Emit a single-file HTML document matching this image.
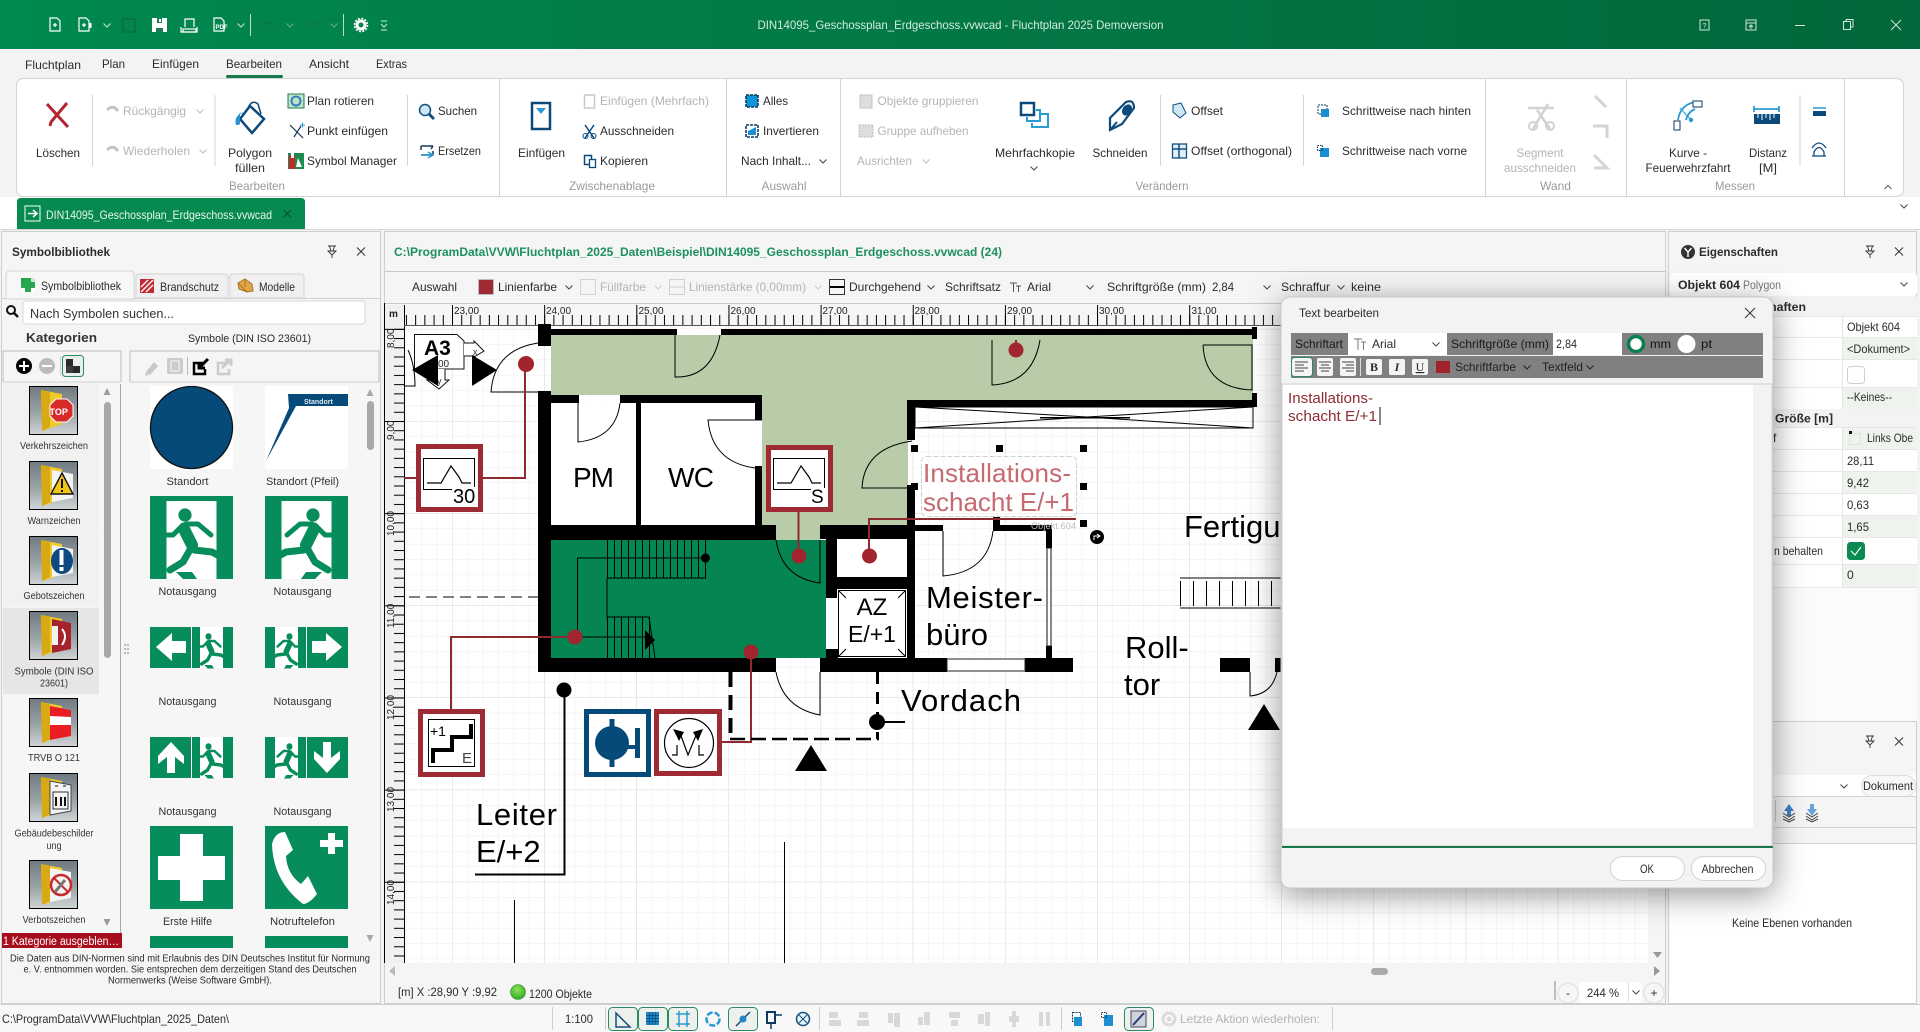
<!DOCTYPE html>
<html lang="de"><head><meta charset="utf-8"><title>Fluchtplan 2025</title>
<style>
html,body{margin:0;padding:0;background:#f3f3f3;overflow:hidden}
svg{display:block}
text{font-family:"Liberation Sans",Arial,sans-serif;font-size:12px;fill:#2b2b2b;white-space:pre}
.g{fill:#b4b4b4}.l{fill:#999}.b{font-weight:bold}.c{text-anchor:middle}
.s{font-size:10px;fill:#333}.w{fill:#111}
.a{font-family:"Liberation Sans",Arial,sans-serif;fill:#000}
.r{font-size:10px;fill:#222}
.ic{fill:none;stroke:#0d4a7c;stroke-width:1.5}
.li{fill:none;stroke:#2a9bd0;stroke-width:2}
.gr{fill:none;stroke:#c9c9c9;stroke-width:1.5}
.th{fill:none;stroke:#000;stroke-width:1}
.red{fill:none;stroke:#8f2a30;stroke-width:2}
.dot{fill:#a0252f}
</style></head><body>
<svg xmlns="http://www.w3.org/2000/svg" width="1920" height="1032" viewBox="0 0 1920 1032">
<defs>
<linearGradient id="tb" x1="0" x2="1" y1="0" y2="0"><stop offset="0" stop-color="#01894f"/><stop offset="1" stop-color="#02673a"/></linearGradient>
<linearGradient id="th" x1="0" x2="0" y1="0" y2="1"><stop offset="0" stop-color="#6f7a80"/><stop offset=".55" stop-color="#9aa3a8"/><stop offset="1" stop-color="#d0d4d6"/></linearGradient>
<radialGradient id="ball" cx=".45" cy=".35" r=".7"><stop offset="0" stop-color="#8fe35c"/><stop offset="1" stop-color="#27a51f"/></radialGradient>
<pattern id="gMin" patternUnits="userSpaceOnUse" x="452" y="421" width="15.36" height="15.36"><path d="M0 0V15.36M0 0H15.36" stroke="#ececec" fill="none"/></pattern>
<pattern id="gMaj" patternUnits="userSpaceOnUse" x="452" y="421" width="92.15" height="92.15"><path d="M0 0V92.15M0 0H92.15" stroke="#dadada" fill="none"/></pattern>
<pattern id="tT" patternUnits="userSpaceOnUse" x="452" y="305" width="9.215" height="20"><path d="M.5 10V20" stroke="#000" fill="none"/></pattern>
<pattern id="tTM" patternUnits="userSpaceOnUse" x="452" y="305" width="92.15" height="20"><path d="M.5 0V20" stroke="#000" fill="none"/></pattern>
<pattern id="tL" patternUnits="userSpaceOnUse" x="385" y="421" width="19" height="9.215"><path d="M9 .5H19" stroke="#000" fill="none"/></pattern>
<pattern id="tLM" patternUnits="userSpaceOnUse" x="385" y="421" width="19" height="92.15"><path d="M0 .5H19" stroke="#000" fill="none"/></pattern>
<path id="ch" d="M-3.5-1.5 0 2 3.5-1.5" fill="none"/>
<g id="m">
 <circle cx="35" cy="19" r="6.6" fill="#078c5c"/>
 <g fill="none" stroke="#078c5c" stroke-linecap="round" stroke-linejoin="round">
  <path d="M34 33 42 49" stroke-width="12"/>
  <path d="M33 29 23 39H17M36 28 48 28 61 39" stroke-width="5"/>
  <path d="M44 54 62 56 75 63M41 52 33 66 20 74" stroke-width="7"/>
 </g>
 <path d="M26 76H42L47 83H33Z" fill="#078c5c"/>
</g>
<g id="man"><rect width="83" height="83" fill="#078c5c"/><rect x="16.5" y="5" width="50" height="78" fill="#fff"/><use href="#m"/></g>
<g id="mini"><rect width="41" height="41" fill="#078c5c"/><rect x="8" y="0" width="23" height="41" fill="#fff"/><g transform="translate(.4 0) scale(.46 .5)"><use href="#m"/></g></g>
<path id="pin" d="M-4-5H4M-2.500-5-1 0H1L2.500-5M-4 0H4L0 4ZM0 4V7" fill="none" stroke="#333" stroke-width=".9"/>
<path id="xx" d="M-4-4 4 4M4-4-4 4" fill="none" stroke="#333" stroke-width="1"/>
<filter id="sh" x="-10%" y="-10%" width="120%" height="125%"><feDropShadow dx="0" dy="6" stdDeviation="16" flood-color="#000" flood-opacity=".42"/></filter>
<g id="fold"><rect x=".5" y=".5" width="48" height="48" fill="url(#th)" stroke="#000"/><path d="M12 4 33 8V38L13 45Z" fill="#f0c92b"/><path d="M12 4 21 6V41L13 45Z" fill="#d7a915"/></g>
</defs>

<!-- base -->
<rect width="1920" height="1032" fill="#f3f3f3"/>
<!-- title bar -->
<rect width="1920" height="49" fill="url(#tb)"/>
<g fill="none" stroke="#fff" stroke-width="1.2">
 <path d="M50 18H57L60 21V31H50Z"/><path d="M53 25H57M55 23V27"/>
 <path d="M79 18H86L89 21V31H79Z"/><path d="M82 25H86M84 23V27"/><path d="M90 23V28" stroke-width="3"/>
 <rect x="183" y="29" width="13" height="3"/><path d="M181 27V32H197V27M185 27V19H194V27"/>
 <path d="M214 18H221L224 21V31H214Z"/>
</g>
<text x="215.500" y="29" style="font-size:6px;font-weight:bold;fill:#fff">PDF</text>
<path d="M152 18H167V32H152Z" fill="#fff"/><path d="M157 18H162V23H157ZM156 28H163V32H156Z" fill="#1c7e50"/><rect x="159" y="19" width="2" height="3" fill="#fff"/>
<rect x="123" y="19" width="12" height="13" fill="none" stroke="#0d6d42" stroke-width="1.5"/>
<g stroke="#c8e6d4" stroke-width="1"><use href="#ch" x="107" y="25"/><use href="#ch" x="241" y="25"/></g>
<g stroke="#6cad8c" stroke-width="1"><use href="#ch" x="290" y="25"/><use href="#ch" x="334" y="25"/></g>
<path d="M250.500 14V36M343.500 14V36" stroke="#bcdcca"/>
<path d="M261 26Q267 19 273 26M308 26Q314 19 320 26" stroke="#0f7347" stroke-width="1.5" fill="none"/>
<circle cx="361" cy="25" r="4" fill="none" stroke="#fff" stroke-width="3"/><circle cx="361" cy="25" r="6.500" fill="none" stroke="#fff" stroke-dasharray="2 1.400" stroke-width="1.600"/>
<path d="M381 21H387M381 24 384 27 387 24M381 30H387" fill="none" stroke="#cfe8da"/>
<text x="757.500" y="29" textLength="406" lengthAdjust="spacingAndGlyphs" style="fill:#d5ebde">DIN14095_Geschossplan_Erdgeschoss.vvwcad - Fluchtplan 2025 Demoversion</text>
<g fill="none" stroke="#cfe6d8">
 <rect x="1700" y="20" width="9" height="10"/><rect x="1746" y="20" width="10" height="10"/><path d="M1746 23H1756M1751 29V25M1749 27 1751 25 1753 27"/>
 <path d="M1795 25.500H1805"/><rect x="1843.500" y="21.500" width="7" height="8"/><path d="M1846 21V19.500H1853V27H1851"/><path d="M1891 20 1901 30M1901 20 1891 30"/>
</g>
<text x="1702.500" y="28" style="font-size:7px;fill:#cfe6d8">?</text>

<!-- ribbon tabs -->
<text x="25" y="69" textLength="56" lengthAdjust="spacingAndGlyphs">Fluchtplan</text>
<text x="102" y="68" textLength="23" lengthAdjust="spacingAndGlyphs">Plan</text>
<text x="152" y="68" textLength="47" lengthAdjust="spacingAndGlyphs">Einfügen</text>
<text x="226" y="68" textLength="56" lengthAdjust="spacingAndGlyphs">Bearbeiten</text>
<text x="309" y="68" textLength="40" lengthAdjust="spacingAndGlyphs">Ansicht</text>
<text x="376" y="68" textLength="31" lengthAdjust="spacingAndGlyphs">Extras</text>
<rect x="226" y="75" width="57" height="3" rx="1.500" fill="#137a4e"/>
<!-- ribbon -->
<path d="M24 78.500H1895Q1903.500 78.500 1903.500 86V188Q1903.500 196.500 1895 196.500H24Q16.500 196.500 16.500 188V86Q16.500 78.500 24 78.500Z" fill="#fff" stroke="#d4d4d4"/>
<g stroke="#d4d4d4"><path d="M499.500 79V196M726.500 79V196M840.500 79V196M1485.500 79V196M1626.500 79V196M1844.500 79V196"/>
<path d="M92.500 95V166M215 95V166M407.500 95V166M1160.500 95V166M1303.500 95V166M1800 95V166"/></g>
<rect y="197" width="1920" height="32" fill="#fff"/><path d="M0 229.500H1920" stroke="#d4d4d4"/>
<!-- ribbon labels -->
<text class="c" x="58" y="157" textLength="44" lengthAdjust="spacingAndGlyphs">Löschen</text>
<text class="g" x="123" y="115" textLength="63" lengthAdjust="spacingAndGlyphs">Rückgängig</text>
<text class="g" x="123" y="155" textLength="67" lengthAdjust="spacingAndGlyphs">Wiederholen</text>
<text class="c" x="250" y="157" textLength="44" lengthAdjust="spacingAndGlyphs">Polygon</text>
<text class="c" x="250" y="172" textLength="30" lengthAdjust="spacingAndGlyphs">füllen</text>
<text x="307" y="105" textLength="67" lengthAdjust="spacingAndGlyphs">Plan rotieren</text>
<text x="307" y="135" textLength="81" lengthAdjust="spacingAndGlyphs">Punkt einfügen</text>
<text x="307" y="165" textLength="90" lengthAdjust="spacingAndGlyphs">Symbol Manager</text>
<text x="438" y="115" textLength="39" lengthAdjust="spacingAndGlyphs">Suchen</text>
<text x="438" y="155" textLength="43" lengthAdjust="spacingAndGlyphs">Ersetzen</text>
<text class="c l" x="257" y="190" textLength="56" lengthAdjust="spacingAndGlyphs">Bearbeiten</text>
<text class="c" x="541.500" y="157" textLength="47" lengthAdjust="spacingAndGlyphs">Einfügen</text>
<text class="g" x="600" y="105" textLength="109" lengthAdjust="spacingAndGlyphs">Einfügen (Mehrfach)</text>
<text x="600" y="135" textLength="74" lengthAdjust="spacingAndGlyphs">Ausschneiden</text>
<text x="600" y="165" textLength="48" lengthAdjust="spacingAndGlyphs">Kopieren</text>
<text class="c l" x="612" y="190" textLength="86" lengthAdjust="spacingAndGlyphs">Zwischenablage</text>
<text x="763" y="105" textLength="25" lengthAdjust="spacingAndGlyphs">Alles</text>
<text x="763" y="135" textLength="56" lengthAdjust="spacingAndGlyphs">Invertieren</text>
<text x="741" y="165" textLength="70" lengthAdjust="spacingAndGlyphs">Nach Inhalt...</text>
<text class="c l" x="784" y="190" textLength="45" lengthAdjust="spacingAndGlyphs">Auswahl</text>
<text class="g" x="877.500" y="105" textLength="101" lengthAdjust="spacingAndGlyphs">Objekte gruppieren</text>
<text class="g" x="877.500" y="135" textLength="91" lengthAdjust="spacingAndGlyphs">Gruppe aufheben</text>
<text class="g" x="857" y="165" textLength="55" lengthAdjust="spacingAndGlyphs">Ausrichten</text>
<text class="c" x="1035" y="157" textLength="80" lengthAdjust="spacingAndGlyphs">Mehrfachkopie</text>
<text class="c" x="1120" y="157" textLength="55" lengthAdjust="spacingAndGlyphs">Schneiden</text>
<text x="1191" y="115" textLength="32" lengthAdjust="spacingAndGlyphs">Offset</text>
<text x="1191" y="155" textLength="101" lengthAdjust="spacingAndGlyphs">Offset (orthogonal)</text>
<text class="c l" x="1162" y="190" textLength="53" lengthAdjust="spacingAndGlyphs">Verändern</text>
<text x="1342" y="115" textLength="129" lengthAdjust="spacingAndGlyphs">Schrittweise nach hinten</text>
<text x="1342" y="155" textLength="125" lengthAdjust="spacingAndGlyphs">Schrittweise nach vorne</text>
<text class="c g" x="1540" y="157" textLength="47" lengthAdjust="spacingAndGlyphs">Segment</text>
<text class="c g" x="1540" y="172" textLength="72" lengthAdjust="spacingAndGlyphs">ausschneiden</text>
<text class="c l" x="1555.500" y="190" textLength="31" lengthAdjust="spacingAndGlyphs">Wand</text>
<text class="c" x="1688" y="157" textLength="38" lengthAdjust="spacingAndGlyphs">Kurve -</text>
<text class="c" x="1688" y="172" textLength="85" lengthAdjust="spacingAndGlyphs">Feuerwehrzfahrt</text>
<text class="c" x="1768" y="157" textLength="38" lengthAdjust="spacingAndGlyphs">Distanz</text>
<text class="c" x="1768" y="172" textLength="18" lengthAdjust="spacingAndGlyphs">[M]</text>
<text class="c l" x="1735" y="190" textLength="40" lengthAdjust="spacingAndGlyphs">Messen</text>
<g stroke="#bbb"><use href="#ch" x="200" y="111"/><use href="#ch" x="203" y="151"/><use href="#ch" x="926" y="161"/></g>
<g stroke="#444"><use href="#ch" x="823" y="161"/><use href="#ch" x="1034" y="168"/><use href="#ch" x="1904" y="206"/></g>
<path d="M1884.500 189 1888 185.500 1891.500 189" fill="none" stroke="#555"/>
<!-- ribbon icons -->
<path d="M47 104 68 127M67 103 51 122 50 126" stroke="#b32530" stroke-width="3" fill="none"/>
<path d="M107 110Q113 104 118 111M107 150Q113 144 118 151" stroke="#c4c4c4" stroke-width="3" fill="none"/>
<path d="M250 106 264 119 252 133 240 119Z" fill="none" stroke="#0d4a7c" stroke-width="2.500"/><path d="M240 114V124Q234 128 236 118L240 113 246 112Z" fill="#2a8fd0"/><path d="M248 108Q252 99 258 104L261 114" fill="none" stroke="#0d4a7c" stroke-width="1.500"/>
<rect x="288" y="94" width="16" height="14" fill="#bfe0cc" stroke="#1b7d50"/><circle cx="296" cy="101" r="4.500" fill="none" stroke="#2a7bb5" stroke-width="1.800"/>
<path d="M290 125 303 138M301 126 294 137" stroke="#16395e" stroke-width="1.200" fill="none"/><path d="M300 125H305M302.500 122.500V127.500" stroke="#2a9bd0"/>
<rect x="288" y="153" width="16" height="16" fill="#1d8a4e"/><rect x="289" y="155" width="6" height="14" fill="#c32a2a"/><path d="M291 153h3v5h-3zM298 158l4 9h-6z" fill="#fff"/>
<circle cx="425" cy="110" r="5.500" fill="#cfe6f5" stroke="#13507f" stroke-width="1.500"/><path d="M429 114 434 119" stroke="#13507f" stroke-width="3"/>
<path d="M421 146H433M421 146V150M433 146 431 149M433 155H421M433 155V151" stroke="#16395e" stroke-width="1.500" fill="none"/><path d="M421 155H431M428 152 433 155 428 158" stroke="#2a9bd0" stroke-width="1.500" fill="none"/>
<rect x="532" y="103" width="18" height="26" fill="none" stroke="#0d4a7c" stroke-width="2.500"/><path d="M536 108H546L541 114Z" fill="#2a9bd0"/>
<rect x="584.500" y="95" width="10" height="13" class="gr"/>
<path d="M585 125 594 138M594 125 585 138" stroke="#0d4a7c" stroke-width="1.500"/><circle cx="585.500" cy="136" r="2.500" fill="none" stroke="#0d4a7c"/><circle cx="593.500" cy="136" r="2.500" fill="none" stroke="#0d4a7c"/>
<rect x="584.500" y="155.500" width="7" height="9" class="ic"/><rect x="589.500" y="159.500" width="6" height="8" fill="#fff" stroke="#0d4a7c" stroke-width="1.300"/>
<rect x="746" y="95" width="12" height="12" fill="#0f96d8" stroke="#0d3a5e" stroke-width="1.600" stroke-dasharray="3 1"/>
<rect x="746" y="125" width="12" height="12" fill="#fff" stroke="#0d3a5e" stroke-width="1.600" stroke-dasharray="3 1"/><path d="M748 135V131L756 127V135Z" fill="#1b8fd0"/>
<rect x="860" y="95" width="12" height="13" fill="#ddd" stroke="#c4c4c4"/><rect x="859" y="125" width="14" height="12" fill="#ddd" stroke="#bfbfbf" stroke-dasharray="2 1"/>
<rect x="1021" y="103" width="13" height="12" fill="none" stroke="#0d4a7c" stroke-width="2.500"/><path d="M1036 110H1040V121H1027V117M1041 114H1048V127H1032V123" fill="none" stroke="#2a9bd0" stroke-width="2"/>
<path d="M1110 130V118L1126 102Q1134 99 1134 108L1122 124Z" fill="none" stroke="#0d4a7c" stroke-width="2.200"/><ellipse cx="1127" cy="110" rx="4.500" ry="6" transform="rotate(35 1127 110)" fill="#0d4a7c"/><path d="M1110 130 1117 122" stroke="#0d4a7c" stroke-width="2"/>
<path d="M1173 105 1181 103 1186 113 1180 118 1173 112Z" fill="#cfe6f5" stroke="#12507d"/>
<rect x="1172.500" y="144" width="14" height="14" fill="#e0eef8" stroke="#12507d" stroke-width="1.300"/><path d="M1172 149H1187M1179 144V158" stroke="#12507d" stroke-width="1.500"/>
<rect x="1318" y="105" width="9" height="9" fill="#fff" stroke="#0d3a5e" stroke-dasharray="2 1"/><rect x="1321" y="109" width="8" height="8" fill="#1b8fd0"/>
<rect x="1320" y="148" width="9" height="9" fill="#1b8fd0"/><rect x="1317.500" y="145.500" width="5" height="5" fill="none" stroke="#0d3a5e" stroke-dasharray="1.500 1"/>
<path d="M1528 108H1554M1533 129 1548 104M1550 129 1537 110" stroke="#d2d2d2" stroke-width="2.500" fill="none"/><circle cx="1533" cy="126" r="4" fill="none" stroke="#d2d2d2" stroke-width="2"/><circle cx="1550" cy="126" r="4" fill="none" stroke="#d2d2d2" stroke-width="2"/>
<path d="M1595 96 1606 107M1593 126H1607V138M1594 155 1607 168H1594" stroke="#d4d4d4" stroke-width="3" fill="none"/>
<path d="M1678 120Q1680 105 1695 102M1686 120Q1688 112 1695 109" fill="none" stroke="#2a9bd0" stroke-width="1.800"/><rect x="1693" y="101" width="9" height="6" fill="#fff" stroke="#0d3a5e"/><rect x="1674" y="121" width="6" height="9" fill="#fff" stroke="#0d3a5e"/><path d="M1680 108 1691 120" stroke="#2a9bd0"/><circle cx="1691" cy="120" r="2.200" fill="#2a9bd0"/>
<path d="M1754 106V112M1779 106V112M1754 109H1779" stroke="#2a9bd0" stroke-width="1.800"/><rect x="1754" y="114" width="26" height="10" fill="#0d4a7c"/><path d="M1758 114V118M1762 114V120M1766 114V118M1770 114V120M1774 114V118" stroke="#fff"/>
<rect x="1813" y="111" width="13" height="5" fill="#0d4a7c"/><path d="M1813 108H1826" stroke="#2a9bd0" stroke-width="1.500"/>
<path d="M1814 156V152Q1819 143 1824 152V156ZM1812 148Q1819 138 1826 148M1812 156H1826" fill="none" stroke="#0d4a7c" stroke-width="1.300"/>
<!-- doc tab -->
<path d="M17 229V202Q17 198 21 198H301Q305 198 305 202V229Z" fill="#068a50"/>
<rect x="25" y="206" width="15" height="15" fill="none" stroke="#fff"/><path d="M28 213.500H36M33 210 37 213.500 33 217" fill="none" stroke="#fff" stroke-width="1.500"/>
<text x="46" y="219" textLength="226" lengthAdjust="spacingAndGlyphs" style="fill:#eaf5ef">DIN14095_Geschossplan_Erdgeschoss.vvwcad</text>
<path d="M283.500 210 291 217.500M291 210 283.500 217.500" stroke="#0a5430" stroke-width="1.200"/>

<!-- left panel -->
<rect x="1.500" y="231.500" width="379" height="772" fill="#f5f5f5" stroke="#cfcfcf"/>
<text class="b" x="12" y="256" style="font-size:11.500px" textLength="98" lengthAdjust="spacingAndGlyphs">Symbolbibliothek</text>
<use href="#pin" x="332" y="251"/><use href="#xx" x="361" y="251.500"/>
<path d="M2 298.500H380" stroke="#cfcfcf"/>
<path d="M6 299V275Q6 271 10 271H130Q134 271 134 275V299Z" fill="#f7f7f7" stroke="#d4d4d4"/>
<path d="M136 298V277Q136 274 139 274H225Q228 274 228 277V298Z" fill="#f0f0f0" stroke="#d4d4d4"/>
<path d="M230 298V277Q230 274 233 274H301Q304 274 304 277V298Z" fill="#f0f0f0" stroke="#d4d4d4"/>
<rect x="21" y="278" width="14" height="14" fill="#fff"/><path d="M25 278H31V282H35V288H31V292H25V288H21V282H25Z" fill="#2aa84f"/><rect x="21" y="278" width="4" height="4" fill="#23a04a"/><rect x="31" y="278" width="4" height="4" fill="#cfe8d4"/>
<text x="41" y="290" textLength="80" lengthAdjust="spacingAndGlyphs">Symbolbibliothek</text>
<rect x="140" y="279" width="14" height="14" fill="#c02a33"/><path d="M141 292 153 280M141 287 148 280M146 292 153 285" stroke="#fff" stroke-width="1.300"/>
<text x="160" y="291" textLength="59" lengthAdjust="spacingAndGlyphs">Brandschutz</text>
<path d="M238 283 245 279 252 284 253 291 247 292 239 289Z" fill="#e0a64a" stroke="#a8731f"/><path d="M245 279V287M238 283 247 292" stroke="#a8731f"/>
<text x="259" y="291" textLength="36" lengthAdjust="spacingAndGlyphs">Modelle</text>
<circle cx="11" cy="310" r="4" fill="none" stroke="#111" stroke-width="2"/><path d="M14 313 18 317" stroke="#111" stroke-width="2.500"/>
<rect x="23" y="301" width="342" height="23" rx="3" fill="#fff" stroke="#d8d8d8"/>
<text x="30" y="318" style="font-size:12.500px;fill:#333" textLength="144" lengthAdjust="spacingAndGlyphs">Nach Symbolen suchen...</text>
<text class="b" x="26" y="342" style="font-size:13px;fill:#333" textLength="71" lengthAdjust="spacingAndGlyphs">Kategorien</text>
<text x="188" y="342" style="font-size:11px" textLength="123" lengthAdjust="spacingAndGlyphs">Symbole (DIN ISO 23601)</text>
<path d="M3 382V351H121V382M130 382V351H379V382" fill="none" stroke="#bdbdbd"/>
<path d="M3 382H121M130 382H379" stroke="#cfcfcf"/>
<circle cx="24" cy="366" r="8" fill="#000"/><path d="M19 366H29M24 361V371" stroke="#fff" stroke-width="2"/>
<circle cx="47" cy="366" r="8" fill="#bbb"/><path d="M42 366H52" stroke="#fff" stroke-width="2"/>
<path d="M60.500 356V376" stroke="#cfcfcf"/>
<rect x="62.500" y="355.500" width="21" height="21" rx="3" fill="#e9f0ea" stroke="#2b8b60"/><rect x="66" y="359" width="14" height="14" fill="#2a2a2a"/><rect x="73" y="359" width="7" height="7" fill="#eee"/><rect x="66" y="366" width="7" height="7" fill="#eee" opacity=".1"/>
<path d="M146 372 154 362 158 366 150 375ZM146 372 145 376 149 375Z" fill="#c8c8c8"/>
<rect x="167" y="358" width="16" height="16" rx="2" fill="#ccc"/><rect x="171" y="361" width="8" height="10" fill="none" stroke="#f2f2f2" stroke-width="1.200"/>
<path d="M187.500 357V375" stroke="#bbb"/>
<path d="M205 363H194V374H205V369" fill="none" stroke="#000" stroke-width="2.500"/><path d="M208 359 199 368M199 362V368H205" fill="none" stroke="#000" stroke-width="3"/>
<path d="M229 363H218V374H229V369" fill="none" stroke="#ccc" stroke-width="2.500"/><path d="M222 368 230 360M225 360H231V366" fill="none" stroke="#ccc" stroke-width="3"/>
<!-- category list -->
<rect x="3" y="384" width="115" height="549" fill="#f6f6f6"/>
<path d="M120.500 384V933" stroke="#a8a8a8"/>
<g fill="#f1f1f1"><rect x="3" y="383" width="96" height="75"/><rect x="3" y="458" width="96" height="74"/><rect x="3" y="533" width="96" height="74"/></g>
<rect x="3" y="608" width="96" height="86" fill="#e6e6e6"/>
<path d="M107 388 110.500 395H103.500ZM107 926 110.500 919H103.500Z" fill="#9c9c9c"/>
<rect x="104" y="402" width="7" height="256" rx="3.500" fill="#a8a8a8"/>
<g fill="#bbb"><rect x="124" y="644" width="2" height="2"/><rect x="127" y="644" width="2" height="2"/><rect x="124" y="648" width="2" height="2"/><rect x="127" y="648" width="2" height="2"/><rect x="124" y="652" width="2" height="2"/><rect x="127" y="652" width="2" height="2"/></g>
<g transform="translate(29 386)"><use href="#fold"/><path d="M27 13H38L44 19V30L38 36H27L21 30V19Z" fill="#d92a2a" stroke="#fff"/><text x="20.500" y="29" style="font-size:9px;font-weight:bold;fill:#fff">TOP</text></g>
<g transform="translate(29 461)"><use href="#fold"/><path d="M23 9 44 13V37L23 41Z" fill="#f4f4f4"/><path d="M33 12 44 33H22Z" fill="#f2c418" stroke="#111" stroke-width="1.400"/><rect x="32" y="18" width="2" height="9" fill="#111"/><rect x="32" y="29" width="2" height="2" fill="#111"/></g>
<g transform="translate(29 536)"><use href="#fold"/><path d="M23 9 44 13V37L23 41Z" fill="#f4f4f4"/><ellipse cx="33" cy="25" rx="11" ry="13" fill="#0e4a80"/><rect x="30.500" y="14" width="4" height="15" fill="#fff"/><rect x="30.500" y="31" width="4" height="4" fill="#fff"/></g>
<g transform="translate(29 611)"><use href="#fold"/><path d="M23 8 42 12V38L23 42Z" fill="#a5232d"/><path d="M23 15H29V34H23Z" fill="#f2f2f2"/><path d="M33 18Q39 25 33 34" stroke="#fff" stroke-width="2" fill="none"/></g>
<g transform="translate(29 698)"><use href="#fold"/><path d="M21 8 42 12V38L21 42Z" fill="#fff"/><path d="M21 8 42 12V19L21 18ZM21 27 42 27V38L21 42Z" fill="#ea1c24"/></g>
<g transform="translate(29 773)"><use href="#fold"/><path d="M21 8 42 12V38L21 42Z" fill="#f3f3f3" stroke="#444"/><rect x="24" y="19" width="15" height="17" fill="none" stroke="#333"/><path d="M27 24V33M32 24V33M36 24V33" stroke="#111" stroke-width="2"/><path d="M26 13H29M34 13H37" stroke="#111"/></g>
<g transform="translate(29 860)"><use href="#fold"/><path d="M21 8 42 12V38L21 42Z" fill="#f3f3f3"/><circle cx="32" cy="25" r="10" fill="none" stroke="#c82a2a" stroke-width="2.500"/><path d="M25 18 39 32" stroke="#c82a2a" stroke-width="2"/><path d="M26 32 36 20" stroke="#777" stroke-width="3"/></g>
<g class="cat">
<text class="c s" x="54" y="449" textLength="68" lengthAdjust="spacingAndGlyphs">Verkehrszeichen</text>
<text class="c s" x="54" y="524" textLength="53" lengthAdjust="spacingAndGlyphs">Warnzeichen</text>
<text class="c s" x="54" y="599" textLength="61" lengthAdjust="spacingAndGlyphs">Gebotszeichen</text>
<text class="c s" x="54" y="674.500" textLength="79" lengthAdjust="spacingAndGlyphs">Symbole (DIN ISO</text>
<text class="c s" x="54" y="686.500" textLength="28" lengthAdjust="spacingAndGlyphs">23601)</text>
<text class="c s" x="54" y="761" textLength="52" lengthAdjust="spacingAndGlyphs">TRVB O 121</text>
<text class="c s" x="54" y="836.500" textLength="79" lengthAdjust="spacingAndGlyphs">Gebäudebeschilder</text>
<text class="c s" x="54" y="849" textLength="15" lengthAdjust="spacingAndGlyphs">ung</text>
<text class="c s" x="54" y="923" textLength="63" lengthAdjust="spacingAndGlyphs">Verbotszeichen</text>
</g>
<rect x="2" y="933" width="120" height="15" fill="#a70d1c"/>
<text x="3" y="945" style="font-size:11.500px;fill:#fff" textLength="116" lengthAdjust="spacingAndGlyphs">1 Kategorie ausgeblen…</text>
<!-- symbol grid -->
<rect x="130" y="384" width="249" height="565" fill="#f6f6f6"/>
<rect x="150" y="386" width="83" height="83" fill="#fff"/><circle cx="191.500" cy="427.500" r="41" fill="#054a78" stroke="#111" stroke-width="1.300"/>
<rect x="265" y="386" width="83" height="83" fill="#fff"/><path d="M288 394H348V406H296L266 461 289 408Z" fill="#054a78"/><text x="304" y="404" style="font-size:7px;fill:#dfe8ef;font-weight:bold">Standort</text>
<text class="c s" x="187.500" y="485" style="font-size:11px" textLength="42" lengthAdjust="spacingAndGlyphs">Standort</text>
<text class="c s" x="302.500" y="485" style="font-size:11px" textLength="73" lengthAdjust="spacingAndGlyphs">Standort (Pfeil)</text>
<use href="#man" x="150" y="496"/><g transform="translate(348 496) scale(-1 1)"><use href="#man"/></g>
<text class="c s" x="187.500" y="595" style="font-size:11px" textLength="58" lengthAdjust="spacingAndGlyphs">Notausgang</text>
<text class="c s" x="302.500" y="595" style="font-size:11px" textLength="58" lengthAdjust="spacingAndGlyphs">Notausgang</text>
<!-- row 3 -->
<rect x="150" y="627" width="83" height="41" fill="#078c5c"/><path d="M156 647 172 633V641H186V653H172V661Z" fill="#fff"/><use href="#mini" x="192" y="627"/><path d="M191.500 627V668" stroke="#fff"/>
<rect x="265" y="627" width="83" height="41" fill="#078c5c"/><path d="M342 647 326 633V641H312V653H326V661Z" fill="#fff"/><g transform="translate(306 627) scale(-1 1)"><use href="#mini"/></g><path d="M306.500 627V668" stroke="#fff"/>
<text class="c s" x="187.500" y="705" style="font-size:11px" textLength="58" lengthAdjust="spacingAndGlyphs">Notausgang</text>
<text class="c s" x="302.500" y="705" style="font-size:11px" textLength="58" lengthAdjust="spacingAndGlyphs">Notausgang</text>
<!-- row 4 -->
<rect x="150" y="737" width="83" height="41" fill="#078c5c"/><path d="M171 742 184 756V764L175 757V773H167V757L158 764V756Z" fill="#fff"/><use href="#mini" x="192" y="737"/><path d="M191.500 737V778" stroke="#fff"/>
<rect x="265" y="737" width="83" height="41" fill="#078c5c"/><path d="M327 773 314 759V751L323 758V742H331V758L340 751V759Z" fill="#fff"/><g transform="translate(306 737) scale(-1 1)"><use href="#mini"/></g><path d="M306.500 737V778" stroke="#fff"/>
<text class="c s" x="187.500" y="815" style="font-size:11px" textLength="58" lengthAdjust="spacingAndGlyphs">Notausgang</text>
<text class="c s" x="302.500" y="815" style="font-size:11px" textLength="58" lengthAdjust="spacingAndGlyphs">Notausgang</text>
<!-- row 5 -->
<rect x="150" y="826" width="83" height="83" fill="#078c5c"/><path d="M180 834H203V856H225V880H203V901H180V880H158V856H180Z" fill="#fff"/>
<rect x="265" y="826" width="83" height="83" fill="#078c5c"/>
<path d="M272 844Q275 832 285 832L293 850 286 856Q287 874 301 884L308 876 317 894Q309 904 303 904Q273 881 272 844Z" fill="#fff"/>
<path d="M320 840H328V833H335V840H343V847H335V854H328V847H320Z" fill="#fff"/>
<text class="c s" x="187.500" y="925" style="font-size:11px" textLength="49" lengthAdjust="spacingAndGlyphs">Erste Hilfe</text>
<text class="c s" x="302.500" y="925" style="font-size:11px" textLength="65" lengthAdjust="spacingAndGlyphs">Notruftelefon</text>
<rect x="150" y="936" width="83" height="12" fill="#078c5c"/><rect x="265" y="936" width="83" height="12" fill="#078c5c"/>
<path d="M370 389 373.500 396H366.500ZM370 942 373.500 935H366.500Z" fill="#a8a8a8"/>
<rect x="367" y="401" width="7" height="49" rx="3.500" fill="#a8a8a8"/>
<text class="c" x="190" y="961.500" style="font-size:10px" textLength="360" lengthAdjust="spacingAndGlyphs">Die Daten aus DIN-Normen sind mit Erlaubnis des DIN Deutsches Institut für Normung</text>
<text class="c" x="190" y="972.500" style="font-size:10px" textLength="333" lengthAdjust="spacingAndGlyphs">e. V. entnommen worden. Sie entsprechen dem derzeitigen Stand des Deutschen</text>
<text class="c" x="190" y="983.500" style="font-size:10px" textLength="164" lengthAdjust="spacingAndGlyphs">Normenwerks (Weise Software GmbH).</text>

<!-- canvas panel -->
<rect x="384.500" y="231.500" width="1281" height="772" fill="#f5f5f5" stroke="#cfcfcf"/>
<text class="b" x="394" y="256" style="font-size:11.500px;fill:#1d9060" textLength="608" lengthAdjust="spacingAndGlyphs">C:\ProgramData\VVW\Fluchtplan_2025_Daten\Beispiel\DIN14095_Geschossplan_Erdgeschoss.vvwcad (24)</text>
<path d="M385 271.500H1665M385 303.500H1665" stroke="#c8c8c8"/>
<text x="412" y="291" textLength="45" lengthAdjust="spacingAndGlyphs">Auswahl</text>
<rect x="478.500" y="279.500" width="15" height="15" fill="#9e2a33" stroke="#bbb"/>
<text x="498" y="291" textLength="59" lengthAdjust="spacingAndGlyphs">Linienfarbe</text>
<rect x="580.500" y="279.500" width="15" height="15" fill="none" stroke="#d4d4d4"/>
<text class="g" x="600" y="291" textLength="46" lengthAdjust="spacingAndGlyphs">Füllfarbe</text>
<rect x="669.500" y="279.500" width="15" height="15" fill="none" stroke="#d0d0d0"/><path d="M670 287H684" stroke="#d0d0d0"/>
<text class="g" x="689" y="291" textLength="117" lengthAdjust="spacingAndGlyphs">Linienstärke (0,00mm)</text>
<rect x="829.500" y="279.500" width="15" height="15" fill="none" stroke="#333"/><path d="M830 287H844" stroke="#000" stroke-width="2"/>
<text x="849" y="291" textLength="72" lengthAdjust="spacingAndGlyphs">Durchgehend</text>
<text x="945" y="291" textLength="56" lengthAdjust="spacingAndGlyphs">Schriftsatz</text>
<path d="M1010 283H1017M1013.500 283V292M1016 286H1021M1018.500 286V292" stroke="#555" fill="none"/>
<text x="1027" y="291" textLength="24" lengthAdjust="spacingAndGlyphs">Arial</text>
<text x="1107" y="291" textLength="99" lengthAdjust="spacingAndGlyphs">Schriftgröße (mm)</text>
<text x="1212" y="291" textLength="22" lengthAdjust="spacingAndGlyphs">2,84</text>
<text x="1281" y="291" textLength="49" lengthAdjust="spacingAndGlyphs">Schraffur</text>
<text x="1351" y="291" textLength="30" lengthAdjust="spacingAndGlyphs">keine</text>
<g stroke="#444"><use href="#ch" x="569" y="287"/><use href="#ch" x="931" y="287"/><use href="#ch" x="1090" y="287"/><use href="#ch" x="1267" y="287"/><use href="#ch" x="1341" y="287"/></g>
<g stroke="#ccc"><use href="#ch" x="658" y="287"/><use href="#ch" x="818" y="287"/></g>
<!-- rulers -->
<rect x="385" y="305" width="1280" height="20" fill="#f6f6f6"/>
<rect x="385" y="305" width="19" height="658" fill="#f0f0f0"/>
<rect x="404" y="305" width="1244" height="20" fill="url(#tT)"/><rect x="404" y="305" width="1244" height="20" fill="url(#tTM)"/>
<rect x="385" y="326" width="19" height="637" fill="url(#tL)"/><rect x="385" y="326" width="19" height="637" fill="url(#tLM)"/>
<path d="M404.500 305V963" stroke="#000"/>
<path d="M385 325.500H1648" stroke="#555"/>
<rect x="385" y="305" width="19" height="21" fill="#f0f0f0"/>
<path d="M384.500 303V963" stroke="#000"/>
<text class="r" x="389" y="317" style="font-weight:bold">m</text>
<g class="rr">
<text class="r" x="454" y="314">23,00</text><text class="r" x="546" y="314">24,00</text><text class="r" x="638.500" y="314">25,00</text><text class="r" x="730.500" y="314">26,00</text><text class="r" x="822.500" y="314">27,00</text><text class="r" x="914.500" y="314">28,00</text><text class="r" x="1007" y="314">29,00</text><text class="r" x="1099" y="314">30,00</text><text class="r" x="1191.500" y="314">31,00</text><text class="r" x="1283.500" y="314">32,00</text>
<text class="r" transform="translate(394 348) rotate(-90)">8,00</text><text class="r" transform="translate(394 440) rotate(-90)">9,00</text><text class="r" transform="translate(394 536) rotate(-90)">10,00</text><text class="r" transform="translate(394 628) rotate(-90)">11,00</text><text class="r" transform="translate(394 720) rotate(-90)">12,00</text><text class="r" transform="translate(394 812) rotate(-90)">13,00</text><text class="r" transform="translate(394 905) rotate(-90)">14,00</text>
</g>
<!-- canvas grid -->
<rect x="405" y="326" width="1243" height="637" fill="#fff"/>
<rect x="405" y="326" width="1243" height="637" fill="url(#gMin)"/>
<rect x="405" y="326" width="1243" height="637" fill="url(#gMaj)"/>

<!-- floor plan -->
<path d="M551 335H1253V400H908V525H820V540H776V525H762V395H551Z" fill="#b8ccaa"/>
<rect x="551" y="540" width="275" height="118" fill="#058552"/>
<rect x="755" y="420" width="7" height="46" fill="#fff"/>
<rect x="826" y="540" width="81" height="118" fill="#fff"/>
<rect x="551" y="403" width="204" height="122" fill="#fff"/>
<g fill="#000">
 <rect x="538" y="324" width="13" height="22"/>
 <rect x="551" y="329" width="126" height="6"/>
 <rect x="721" y="329" width="536" height="6"/>
 <rect x="1252" y="327" width="5" height="12"/><rect x="1252" y="393" width="5" height="14"/>
 <rect x="538" y="391" width="13" height="281"/>
 <rect x="551" y="395" width="28" height="8"/>
 <rect x="620" y="395" width="142" height="8"/>
 <rect x="636" y="403" width="5" height="122"/>
 <rect x="755" y="403" width="7" height="17"/>
 <rect x="755" y="466" width="7" height="59"/>
 <rect x="551" y="525" width="225" height="15"/>
 <rect x="820" y="525" width="87" height="14"/>
 <rect x="907" y="525" width="36" height="6"/>
 <rect x="993" y="525" width="59" height="6"/>
 <rect x="993" y="517" width="7" height="8"/>
 <rect x="826" y="539" width="11" height="59"/>
 <rect x="826" y="649" width="12" height="9"/>
 <rect x="837" y="577" width="70" height="12"/>
 <rect x="907" y="400" width="8" height="40"/>
 <rect x="915" y="400" width="342" height="7"/>
 <rect x="907" y="485" width="8" height="173"/>
 <rect x="1046" y="531" width="6" height="17"/>
 <rect x="1046" y="646" width="6" height="14"/>
 <rect x="551" y="658" width="225" height="14"/>
 <rect x="820" y="658" width="127" height="14"/>
 <rect x="1025" y="658" width="48" height="14"/>
 <rect x="1220" y="658" width="30" height="14"/>
 <rect x="1275" y="658" width="6" height="14"/>
</g>
<rect x="677" y="329" width="44" height="6" fill="#fff"/>
<rect x="947" y="659" width="78" height="12" fill="#fff" stroke="#222"/>
<path d="M1047 548H1051V646H1047Z" fill="#fff" stroke="#111"/>
<!-- door lines -->
<g class="th">
 <path d="M675 335V377Q712 378 720 335"/>
 <path d="M538 392H491Q494 350 538 343"/>
 <path d="M578 403V442Q616 438 620 403"/>
 <path d="M762 420H708Q712 462 755 468H762"/>
 <path d="M912 488H862Q864 448 912 441"/>
 <path d="M776 540Q782 578 820 583V540"/>
 <path d="M776 672Q783 708 820 715V672"/>
 <path d="M943 531V576Q988 572 993 531"/>
 <path d="M992 340V385Q1033 383 1040 340"/>
 <path d="M1203 345H1252V390Q1205 388 1203 345"/>
 <path d="M1250 672V696Q1272 694 1277 672"/>
 <path d="M915 407H1253V428H915Z"/>
 <path d="M915 407 1087 417 1253 407M915 428 1087 417 1253 428"/>
 <path d="M408 350Q415 365 415 386H405"/>
 <path d="M1180 578H1281M1180 608H1281"/>
 <path d="M1180.500 581V606M1193.500 581V606M1206.500 581V606M1219.500 581V606M1232.500 581V606M1245.500 581V606M1258.500 581V606M1271.500 581V606"/>
 <path d="M514.500 900V963M784.500 842V963"/>
 <path d="M409 597H538" stroke-dasharray="11 6"/>
</g>
<rect x="1040" y="417" width="90" height="1.500" fill="#000"/>
<!-- stairs -->
<g class="th">
 <path d="M607.500 540V578M614.500 540V578M621.500 540V578M628.500 540V578M635.500 540V578M642.500 540V578M649.500 540V578M656.500 540V578M663.500 540V578M670.500 540V578M677.500 540V578M684.500 540V578M691.500 540V578M698.500 540V578M705.500 540V578"/>
 <path d="M607.500 617V658M614.500 617V658M621.500 617V658M628.500 617V658M635.500 617V658M642.500 617V658M649.500 617V658" />
 <path d="M577.500 558H706M607 578H706M607 578V617H649L655 658M577.500 558V637H645"/>
</g>
<circle cx="705.500" cy="558" r="4.500" fill="#000"/>
<path d="M645 630 655 640 645 650Z" fill="#000"/>
<!-- red routes -->
<g class="red">
 <path d="M404 478H416M483 478H525V364"/>
 <path d="M798.500 512V556"/>
 <path d="M869 556V519H1076"/>
 <path d="M451 709V637H575"/>
 <path d="M722 742H751V652"/>
 <path d="M1016 340V350"/>
</g>
<circle class="dot" cx="526" cy="364" r="8"/><circle class="dot" cx="799" cy="556" r="7.500"/><circle class="dot" cx="869.500" cy="556" r="7.500"/><circle class="dot" cx="575" cy="637" r="7.500"/><circle class="dot" cx="751" cy="652" r="7.500"/><circle class="dot" cx="1016" cy="350" r="7.500"/>
<!-- A3 stamp -->
<path d="M414.500 334.500H457L464 341V369H414.500Z" fill="#fff" stroke="#111"/>
<text class="a b" x="424" y="355" style="font-size:21px;font-weight:bold">A3</text>
<text x="438" y="367" style="font-size:10px">00</text>
<path d="M464 343H474V341L484 351 474 357V356H464" fill="#fff" stroke="#111"/><text x="473" y="355" style="font-size:9px">x</text>
<path d="M432 369V380H427L439 389 449 380H445V369" fill="#fff" stroke="#111"/><text x="437" y="384" style="font-size:9px">y</text>
<path d="M412 370 438 355V386Z" fill="#000"/><path d="M472 355 497 370 472 386Z" fill="#000"/>
<!-- signs -->
<rect x="418.500" y="446.500" width="62" height="63" fill="#fff" stroke="#9e2a33" stroke-width="5"/>
<rect x="423.500" y="458.500" width="51" height="31" fill="none" stroke="#000"/>
<path d="M427 483H441L451 466 459 477 462 483H471" fill="none" stroke="#000" stroke-width="1.200"/>
<rect x="452" y="487" width="24" height="20" fill="#fff"/><text class="a" x="453" y="503" style="font-size:20px">30</text>
<rect x="768.500" y="447.500" width="62" height="62" fill="#fff" stroke="#9e2a33" stroke-width="5"/>
<rect x="773.500" y="458.500" width="51" height="31" fill="none" stroke="#000"/>
<path d="M777 483H791L801 466 809 477 812 483H821" fill="none" stroke="#000" stroke-width="1.200"/>
<rect x="811" y="488" width="15" height="19" fill="#fff"/><text class="a" x="811" y="503" style="font-size:19px">S</text>
<rect x="420.500" y="711.500" width="62" height="63" fill="#fff" stroke="#9e2a33" stroke-width="5"/>
<rect x="428.500" y="719.500" width="46" height="47" fill="none" stroke="#000"/>
<path d="M433 763V750H452V737H471V724" fill="none" stroke="#000" stroke-width="4"/>
<text class="a" x="430" y="736" style="font-size:14px">+1</text><text x="462" y="763" style="font-size:15px;fill:#444">E</text>
<rect x="586.500" y="711.500" width="62" height="63" fill="#fff" stroke="#054a78" stroke-width="5"/>
<circle cx="612" cy="743" r="17" fill="#054a78"/><rect x="609.500" y="719" width="5" height="48" fill="#054a78"/><rect x="625" y="745" width="12" height="4" fill="#054a78"/><rect x="635" y="728" width="5" height="30" fill="#054a78"/>
<rect x="656.500" y="711.500" width="63" height="62" fill="#fff" stroke="#9e2a33" stroke-width="5"/>
<circle cx="689" cy="743" r="24.500" fill="none" stroke="#000" stroke-width="1.200"/>
<path d="M672 755H677V745M704 755H699V745M680 733 688 755 697 733" fill="none" stroke="#000" stroke-width="1.200"/><path d="M673 729 684 732 679 741ZM703 729 693 732 698 741Z" fill="#000"/>
<!-- dashed vordach -->
<path d="M730.500 672V739" stroke="#000" stroke-width="4" stroke-dasharray="15 8" fill="none"/>
<path d="M877.500 672V739" stroke="#000" stroke-width="3" stroke-dasharray="12 8" fill="none"/>
<path d="M730 739H879" stroke="#000" stroke-width="2.500" stroke-dasharray="15 6" fill="none"/>
<circle cx="877" cy="722" r="8" fill="#000"/><path d="M877 722H905" stroke="#000" stroke-width="2"/>
<path d="M795 771 811 745 827 771Z" fill="#000"/><path d="M1248 730 1264 704 1280 730Z" fill="#000"/>
<circle cx="564" cy="690" r="7.500" fill="#000"/><path d="M564.500 690V874.500H475" stroke="#000" stroke-width="2" fill="none"/>
<!-- AZ box -->
<rect x="838.500" y="590.500" width="67" height="66" fill="#fff" stroke="#000"/>
<path d="M839 591 846 598M905 591 898 598M839 656 846 649M905 656 898 649" stroke="#000"/>
<text class="a c" x="872" y="615" style="font-size:24px">AZ</text><text class="a c" x="872" y="642" style="font-size:23px">E/+1</text>
<!-- plan labels -->
<text class="a" x="573" y="487" style="font-size:28px" textLength="41">PM</text>
<text class="a" x="668" y="487" style="font-size:28px" textLength="46">WC</text>
<text class="a" x="1184" y="537" style="font-size:31px">Fertigung</text>
<text class="a" x="926" y="608" style="font-size:31px" textLength="117">Meister-</text>
<text class="a" x="926" y="645" style="font-size:31px">büro</text>
<text class="a" x="1125" y="658" style="font-size:31px">Roll-</text>
<text class="a" x="1124" y="695" style="font-size:31px">tor</text>
<text class="a" x="901" y="711" style="font-size:31px" textLength="120">Vordach</text>
<text class="a" x="476" y="825" style="font-size:31px" textLength="81">Leiter</text>
<text class="a" x="476" y="862" style="font-size:31px">E/+2</text>
<!-- selected text -->
<rect x="921.500" y="456.500" width="155" height="60" rx="5" fill="#fff" fill-opacity=".55" stroke="#cfcfcf" stroke-dasharray="5 2"/>
<text x="923" y="482" style="font-size:26px;fill:#c76a70" textLength="148">Installations-</text>
<text x="923" y="511" style="font-size:26px;fill:#c76a70" textLength="151">schacht E/+1</text>
<g fill="#000"><rect x="911" y="445" width="7" height="7"/><rect x="996" y="445" width="7" height="7"/><rect x="1080" y="445" width="7" height="7"/><rect x="911" y="483" width="7" height="7"/><rect x="1080" y="483" width="7" height="7"/><rect x="1080" y="520" width="7" height="7"/></g>
<text x="1031" y="529" style="font-size:9px;fill:#bbb" textLength="45">Objekt 604</text>
<circle cx="1097" cy="537" r="7" fill="#000"/><path d="M1094 540V536H1099M1097 534 1100 536 1097 538M1100 535" fill="none" stroke="#fff"/>

<!-- canvas bottom -->
<rect x="385" y="963" width="1280" height="40" fill="#f5f5f5"/>
<path d="M1653 952H1662L1657.500 958Z" fill="#999"/>
<path d="M1654 966V976L1660 971Z" fill="#999"/><path d="M395 966V976L389 971Z" fill="#bbb"/>
<rect x="1371" y="968" width="17" height="7" rx="3.500" fill="#aaa"/>
<text x="398" y="996" textLength="99" lengthAdjust="spacingAndGlyphs">[m] X :28,90 Y :9,92</text>
<circle cx="518" cy="992" r="7.500" fill="url(#ball)" stroke="#3b8c3b" stroke-width=".6"/>
<text x="529" y="998" textLength="63" lengthAdjust="spacingAndGlyphs">1200 Objekte</text>
<path d="M1555 981V1000" stroke="#888"/>
<circle cx="1568" cy="993" r="10" fill="#f7f7f7" stroke="#ddd"/><text class="c" x="1568" y="997">-</text>
<rect x="1579" y="982" width="63" height="21" rx="3" fill="#fff"/><text x="1587" y="997" textLength="32" lengthAdjust="spacingAndGlyphs">244 %</text><path d="M1628.500 982V1002" stroke="#e0e0e0"/><g stroke="#444"><use href="#ch" x="1636" y="992"/></g>
<circle cx="1654" cy="993" r="10" fill="#f7f7f7" stroke="#ddd"/><text class="c" x="1654" y="997">+</text>

<!-- right panel -->
<rect x="1668.500" y="231.500" width="248" height="490" fill="#f5f5f5" stroke="#cfcfcf"/>
<circle cx="1688" cy="252" r="7" fill="#333"/><path d="M1684.500 248 1688 252 1691.500 248M1688 252V257" stroke="#f5f5f5" stroke-width="1.500" fill="none"/>
<text class="b" x="1699" y="256" style="font-size:11.500px" textLength="79" lengthAdjust="spacingAndGlyphs">Eigenschaften</text>
<use href="#pin" x="1870" y="251"/><use href="#xx" x="1899" y="251.500"/>
<rect x="1670" y="273" width="247" height="23" rx="4" fill="#fff"/>
<text class="b" x="1678" y="289" textLength="62" lengthAdjust="spacingAndGlyphs">Objekt 604</text>
<text x="1743" y="289" style="fill:#777" textLength="38" lengthAdjust="spacingAndGlyphs">Polygon</text>
<g stroke="#444"><use href="#ch" x="1904" y="284"/></g>
<rect x="1670" y="297" width="247" height="290" fill="#fff"/>
<rect x="1670" y="297" width="247" height="19" fill="#f3f3f3"/>
<rect x="1670" y="409" width="247" height="18" fill="#f3f3f3"/>
<g fill="#eef3ee"><rect x="1842" y="337" width="75" height="22"/><rect x="1842" y="387" width="75" height="22"/><rect x="1842" y="427" width="75" height="22"/><rect x="1842" y="471" width="75" height="22"/><rect x="1842" y="515" width="75" height="22"/><rect x="1842" y="564" width="75" height="23"/></g>
<path d="M1670 316.500H1917M1670 337.500H1917M1670 359.500H1917M1670 387.500H1917M1670 427.500H1917M1670 449.500H1917M1670 471.500H1917M1670 493.500H1917M1670 515.500H1917M1670 537.500H1917M1670 564.500H1917M1670 587.500H1917" stroke="#e6e6e6"/>
<path d="M1842.500 316V409M1842.500 427V587" stroke="#e6e6e6"/>
<text class="b" x="1722" y="311" textLength="84" lengthAdjust="spacingAndGlyphs">Eigenschaften</text>
<text x="1847" y="331" textLength="53" lengthAdjust="spacingAndGlyphs">Objekt 604</text>
<text x="1847" y="353" textLength="63" lengthAdjust="spacingAndGlyphs">&lt;Dokument&gt;</text>
<rect x="1847.500" y="366.500" width="17" height="17" rx="3" fill="#fff" stroke="#d0d0d0"/>
<text x="1847" y="401" textLength="45" lengthAdjust="spacingAndGlyphs">--Keines--</text>
<text class="b" x="1775" y="422.500" textLength="58" lengthAdjust="spacingAndGlyphs">Größe [m]</text>
<text x="1773" y="442">f</text>
<rect x="1849.500" y="433.500" width="11" height="11" fill="none" stroke="#dde6dd"/><rect x="1849" y="431" width="3" height="3" fill="#111"/>
<text x="1867" y="442" textLength="46" lengthAdjust="spacingAndGlyphs">Links Obe</text>
<text x="1847" y="465" textLength="27" lengthAdjust="spacingAndGlyphs">28,11</text>
<text x="1847" y="487" textLength="22" lengthAdjust="spacingAndGlyphs">9,42</text>
<text x="1847" y="509" textLength="22" lengthAdjust="spacingAndGlyphs">0,63</text>
<text x="1847" y="531" textLength="22" lengthAdjust="spacingAndGlyphs">1,65</text>
<text x="1774" y="555" textLength="49" lengthAdjust="spacingAndGlyphs">n behalten</text>
<rect x="1847" y="542" width="18" height="18" rx="3.500" fill="#0b8a52"/><path d="M1851 551 1855 555 1861 547" fill="none" stroke="#fff" stroke-width="1.200"/>
<text x="1847" y="579">0</text>
<rect x="1670" y="588" width="247" height="133" fill="#fbfbfb"/>
<!-- lower panel -->
<rect x="1668.500" y="721.500" width="248" height="282" fill="#fff" stroke="#cfcfcf"/>
<rect x="1669" y="722" width="247" height="53" fill="#f5f5f5"/>
<use href="#pin" x="1870" y="741"/><use href="#xx" x="1899" y="741.500"/>
<rect x="1669" y="775" width="188" height="21" fill="#fff"/>
<g stroke="#444"><use href="#ch" x="1844" y="786"/></g>
<rect x="1861.500" y="775.500" width="54" height="21" rx="10" fill="#f7f7f7" stroke="#ddd"/>
<text x="1863" y="790" textLength="50" lengthAdjust="spacingAndGlyphs">Dokument</text>
<rect x="1669" y="797" width="247" height="46" fill="#f5f5f5"/>
<path d="M1669 796.500H1916M1669 827.500H1916M1669 843.500H1916" stroke="#d4d4d4"/>
<path d="M1775.500 800V822" stroke="#ccc"/>
<path d="M1789 804 1794 811H1791V816H1787V811H1784Z" fill="#3d7fc4"/><path d="M1783 813 1789 817 1795 813M1783 816 1789 820 1795 816M1783 819 1789 822 1795 819" stroke="#444" fill="none"/>
<path d="M1812 816 1817 809H1814V804H1810V809H1807Z" fill="#6aa2db"/><path d="M1806 813 1812 817 1818 813M1806 816 1812 820 1818 816M1806 819 1812 822 1818 819" stroke="#444" fill="none"/>
<text class="c" x="1792" y="927" textLength="120" lengthAdjust="spacingAndGlyphs">Keine Ebenen vorhanden</text>

<!-- status bar -->
<rect y="1004" width="1920" height="28" fill="#f8f8f8"/><path d="M0 1004.500H1920" stroke="#cfcfcf"/>
<text x="2" y="1023" textLength="227" lengthAdjust="spacingAndGlyphs">C:\ProgramData\VVW\Fluchtplan_2025_Daten\</text>
<path d="M552.500 1007V1030M605.500 1007V1030M819.500 1007V1030M1061.500 1007V1030M1332.500 1007V1030" stroke="#cfcfcf"/>
<text x="565" y="1023" textLength="28" lengthAdjust="spacingAndGlyphs">1:100</text>
<g fill="#eef0ee" stroke="#2b8b60"><rect x="608.500" y="1007.500" width="29" height="23" rx="4"/><rect x="638.500" y="1007.500" width="29" height="23" rx="4"/><rect x="668.500" y="1007.500" width="29" height="23" rx="4"/><rect x="728.500" y="1007.500" width="29" height="23" rx="4"/><rect x="1124.500" y="1007.500" width="29" height="23" rx="4"/></g>
<path d="M616 1013V1027H630Z" fill="none" stroke="#12507d" stroke-width="1.500"/>
<rect x="646" y="1012" width="13" height="13" fill="#1f87c6"/><path d="M649.500 1012V1025M652.500 1012V1025M655.500 1012V1025M646 1015.500H659M646 1018.500H659M646 1021.500H659" stroke="#0d4a7c" stroke-width=".7"/>
<path d="M676 1014H690M676 1024H690M679 1011V1027M687 1011V1027" stroke="#2a9bd0" stroke-width="1.500"/>
<circle cx="713" cy="1019" r="6.500" fill="none" stroke="#2a9bd0" stroke-width="2.500" stroke-dasharray="6 2"/>
<path d="M736 1026 750 1012" stroke="#12507d" stroke-width="1.500"/><circle cx="743" cy="1019" r="3.500" fill="#1f87c6"/>
<rect x="767" y="1012" width="8" height="11" fill="none" stroke="#0d3a5e" stroke-width="2"/><path d="M776 1015H782M771 1023V1029" stroke="#0d3a5e" stroke-width="1.500"/>
<circle cx="803" cy="1019" r="6.500" fill="#e8f3fa" stroke="#12507d" stroke-width="1.500"/><path d="M799 1015 807 1023M807 1015 799 1023" stroke="#12507d"/>
<g fill="#d8d8d8"><rect x="829" y="1012" width="9" height="6"/><rect x="829" y="1020" width="12" height="6"/><rect x="859" y="1012" width="9" height="6"/><rect x="857" y="1020" width="12" height="6"/><rect x="888" y="1013" width="5" height="10"/><rect x="894" y="1013" width="6" height="14"/><rect x="918" y="1017" width="5" height="8"/><rect x="924" y="1012" width="6" height="13"/><rect x="949" y="1012" width="11" height="6"/><rect x="951" y="1020" width="7" height="6"/><rect x="978" y="1014" width="6" height="10"/><rect x="985" y="1012" width="5" height="14"/><rect x="1009" y="1016" width="10" height="6"/><rect x="1012" y="1011" width="4" height="16"/><rect x="1039" y="1012" width="4" height="14"/><rect x="1046" y="1012" width="4" height="14"/></g>
<rect x="1072.500" y="1012.500" width="8" height="9" fill="#fff" stroke="#0d3a5e" stroke-dasharray="2 1"/><rect x="1074" y="1017" width="8" height="9" fill="#1b8fd0"/>
<rect x="1104" y="1015" width="9" height="11" fill="#1b8fd0"/><rect x="1101.500" y="1012.500" width="5" height="5" fill="none" stroke="#0d3a5e" stroke-dasharray="1.500 1"/>
<rect x="1131" y="1011" width="15" height="16" fill="#cfd3dc" stroke="#444a66"/><path d="M1133 1025 1144 1013" stroke="#2a3d7a" stroke-width="2"/>
<circle cx="1169" cy="1019" r="7.500" fill="#dcdcdc"/><circle cx="1169" cy="1019" r="3.500" fill="none" stroke="#fff" stroke-width="1.500"/>
<text class="g" x="1180" y="1023" textLength="140" lengthAdjust="spacingAndGlyphs">Letzte Aktion wiederholen:</text>

<!-- dialog -->
<g filter="url(#sh)"><rect x="1281" y="297" width="492" height="591" rx="9" fill="#f3f3f3" stroke="#c8c8c8"/></g>
<rect x="1281" y="297" width="492" height="591" rx="9" fill="#f3f3f3" stroke="#c8c8c8"/>
<text x="1299" y="317" textLength="80" lengthAdjust="spacingAndGlyphs">Text bearbeiten</text>
<path d="M1745 308 1755 318M1755 308 1745 318" stroke="#333" fill="none"/>
<rect x="1291" y="333" width="472" height="22" fill="#808080"/>
<rect x="1291" y="356" width="472" height="22" fill="#808080"/>
<text x="1295" y="348" style="fill:#1a1a1a" textLength="48" lengthAdjust="spacingAndGlyphs">Schriftart</text>
<rect x="1348" y="333" width="99" height="22" fill="#fff"/>
<path d="M1354 339H1362M1358 339V350M1361 342H1366M1363.500 342V350" stroke="#777" fill="none"/>
<text x="1372" y="348" textLength="24" lengthAdjust="spacingAndGlyphs">Arial</text>
<g stroke="#444"><use href="#ch" x="1436" y="344"/><use href="#ch" x="1612" y="344"/></g>
<text x="1451" y="348" style="fill:#1a1a1a" textLength="98" lengthAdjust="spacingAndGlyphs">Schriftgröße (mm)</text>
<rect x="1553" y="333" width="69" height="22" fill="#fff"/>
<text x="1556" y="348" textLength="21" lengthAdjust="spacingAndGlyphs">2,84</text>
<circle cx="1636" cy="344" r="7.500" fill="#fff" stroke="#0b7f50" stroke-width="3.500"/>
<text x="1650" y="348" style="fill:#111" textLength="21" lengthAdjust="spacingAndGlyphs">mm</text>
<circle cx="1686.500" cy="344" r="9" fill="#fff"/>
<text x="1701" y="348" style="fill:#111" textLength="11" lengthAdjust="spacingAndGlyphs">pt</text>
<rect x="1291.500" y="357.500" width="21" height="19" rx="3" fill="#f4f4f4" stroke="#2b8b60"/>
<rect x="1317" y="358" width="16" height="18" rx="2" fill="#f4f4f4"/><rect x="1340" y="358" width="16" height="18" rx="2" fill="#f4f4f4"/>
<path d="M1295 362H1308M1295 365H1304M1295 368H1308M1295 371H1304M1319 362H1331M1321 365H1329M1319 368H1331M1321 371H1329M1342 362H1354M1346 365H1354M1342 368H1354M1346 371H1354" stroke="#444"/>
<path d="M1360.500 358V376" stroke="#ddd"/>
<g fill="#f4f4f4"><rect x="1366" y="359" width="16" height="16" rx="2"/><rect x="1389" y="359" width="16" height="16" rx="2"/><rect x="1412" y="359" width="16" height="16" rx="2"/></g>
<text class="c" x="1374" y="371" style="font-family:'Liberation Serif',serif;font-weight:bold">B</text>
<text class="c" x="1397" y="371" style="font-family:'Liberation Serif',serif;font-style:italic;font-weight:bold">I</text>
<text class="c" x="1420" y="371" style="font-family:'Liberation Serif',serif;text-decoration:underline">U</text>
<rect x="1436" y="361" width="14" height="12" fill="#a3232d"/>
<text x="1455" y="371" style="fill:#222" textLength="61" lengthAdjust="spacingAndGlyphs">Schriftfarbe</text>
<text x="1542" y="371" style="fill:#222" textLength="41" lengthAdjust="spacingAndGlyphs">Textfeld</text>
<g stroke="#222"><use href="#ch" x="1527" y="367"/><use href="#ch" x="1590" y="367"/></g>
<rect x="1282" y="384" width="490" height="462" fill="#f3f3f3" stroke="#d0d0d0"/>
<rect x="1283" y="385" width="470" height="443" fill="#fff"/>
<rect x="1282" y="846" width="491" height="2" fill="#17784e"/>
<text x="1288" y="403" style="font-size:15px;fill:#8c2b33" textLength="85" lengthAdjust="spacingAndGlyphs">Installations-</text>
<text x="1288" y="421" style="font-size:15px;fill:#8c2b33" textLength="89" lengthAdjust="spacingAndGlyphs">schacht E/+1</text>
<path d="M1380 407V425" stroke="#111"/>
<rect x="1610.500" y="856.500" width="74" height="24" rx="12" fill="#fff" stroke="#d4d4d4"/>
<rect x="1691.500" y="856.500" width="74" height="24" rx="12" fill="#fff" stroke="#d4d4d4"/>
<text class="c" x="1647" y="873" textLength="14" lengthAdjust="spacingAndGlyphs">OK</text>
<text class="c" x="1727.500" y="873" textLength="52" lengthAdjust="spacingAndGlyphs">Abbrechen</text>
</svg>
</body></html>
